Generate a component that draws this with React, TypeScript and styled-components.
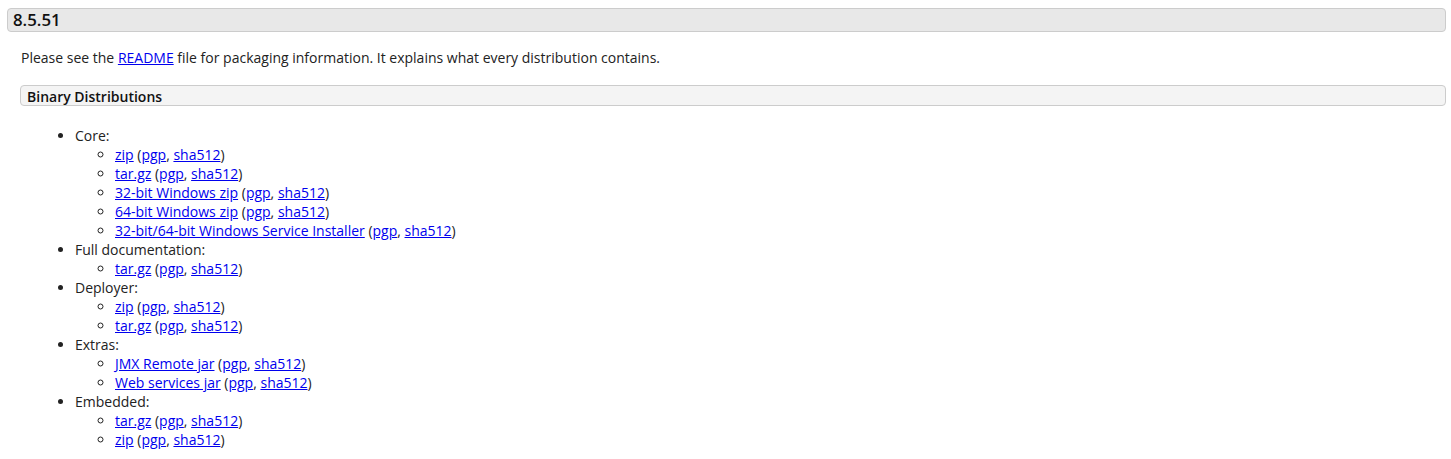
import React from "react";
import styled, { createGlobalStyle } from "styled-components";

const Global = createGlobalStyle`
  html, body { margin: 0; padding: 0; background: #fff; }
  body { font-family: "Open Sans", "Liberation Sans", sans-serif; font-size: 14px; color: #222; }
`;

const Page = styled.div`
  padding: 8px 5px 0 7px;
`;

const VersionHeader = styled.h3`
  margin: 0;
  background: #e8e8e8;
  border: 1px solid #ccc;
  border-radius: 4px;
  padding: 0 5px;
  height: 24px;
  box-sizing: border-box;
  font-size: 16.8px;
  line-height: 22px;
  font-weight: 600;
  color: #111;
`;

const Body = styled.div`
  padding-left: 13px;
`;

const Para = styled.p`
  margin: 16px 0 0 1px;
  line-height: 20px;
`;

const SubHeader = styled.h4`
  margin: 17px 0 0 0;
  background: #f4f4f4;
  border: 1px solid #ccc;
  border-radius: 4px;
  padding: 1px 6px 0;
  height: 21px;
  box-sizing: border-box;
  font-size: 14px;
  line-height: 19px;
  font-weight: 600;
  color: #111;
`;

const List = styled.ul`
  margin: 20px 0 0 0;
  padding-left: 55px;
  list-style: disc;
  line-height: 19px;
`;

const SubList = styled.ul`
  margin: 0;
  padding-left: 40px;
  list-style: circle;
`;

const Item = styled.li``;

const Link = styled.a`
  color: #0000ee;
  text-decoration: underline;
`;

const groups: { title: string; items: string[] }[] = [
  { title: "Core:", items: ["zip", "tar.gz", "32-bit Windows zip", "64-bit Windows zip", "32-bit/64-bit Windows Service Installer"] },
  { title: "Full documentation:", items: ["tar.gz"] },
  { title: "Deployer:", items: ["zip", "tar.gz"] },
  { title: "Extras:", items: ["JMX Remote jar", "Web services jar"] },
  { title: "Embedded:", items: ["tar.gz", "zip"] },
];

export default function App() {
  return (
    <Page>
      <Global />
      <VersionHeader>8.5.51</VersionHeader>
      <Body>
        <Para>
          Please see the <Link href="#">README</Link> file for packaging information. It explains what every distribution contains.
        </Para>
        <SubHeader>Binary Distributions</SubHeader>
        <List>
          {groups.map((g) => (
            <Item key={g.title}>
              {g.title}
              <SubList>
                {g.items.map((it, i) => (
                  <Item key={i}>
                    <Link href="#">{it}</Link> (<Link href="#">pgp</Link>, <Link href="#">sha512</Link>)
                  </Item>
                ))}
              </SubList>
            </Item>
          ))}
        </List>
      </Body>
    </Page>
  );
}
